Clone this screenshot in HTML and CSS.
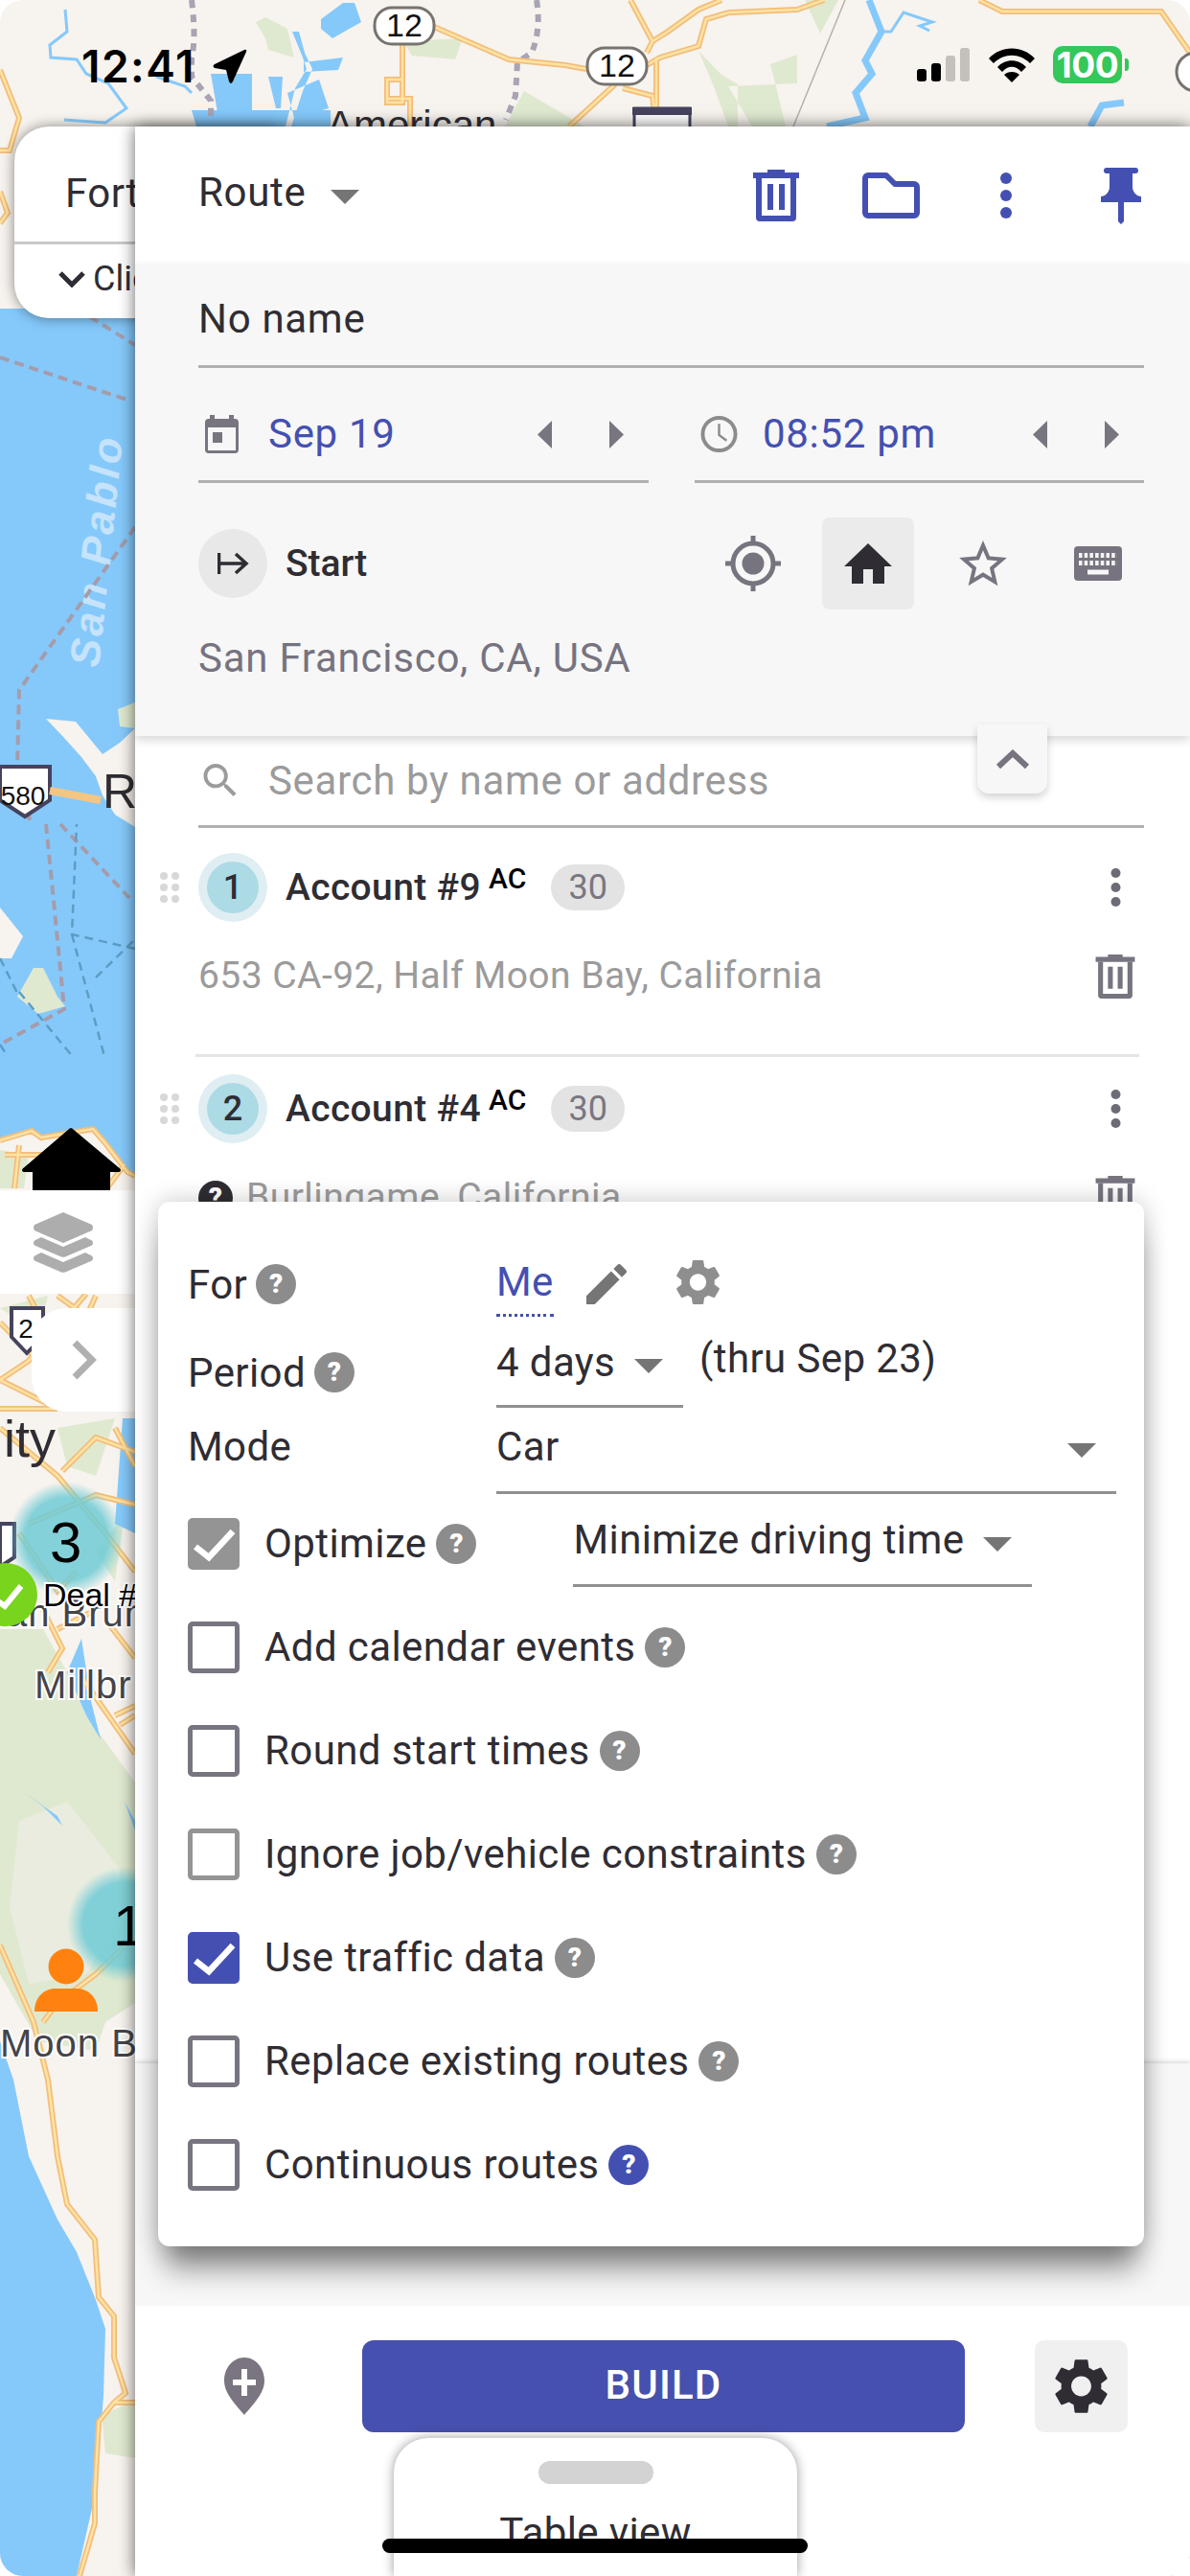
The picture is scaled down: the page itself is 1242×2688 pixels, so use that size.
FILE: index.html
```html
<!DOCTYPE html>
<html lang="en">
<head>
<meta charset="utf-8">
<title>Route planner</title>
<link rel="stylesheet" href="styles.css">
</head>
<body>
<svg class="defs" width="0" height="0" aria-hidden="true">
  <defs>
    <symbol id="i-trash" viewBox="0 0 48 54"><path d="M15 0h18v3h15v6H0V3h15z"/><path fill-rule="evenodd" d="M3 9h42v41a4 4 0 0 1-4 4H7a4 4 0 0 1-4-4zM9 9v39h30V9z"/><path d="M15 15h6v27h-6zM27 15h6v27h-6z"/></symbol>
    <symbol id="i-dots" viewBox="0 0 12 48"><circle cx="6" cy="6" r="6"/><circle cx="6" cy="24" r="6"/><circle cx="6" cy="42" r="6"/></symbol>
    <symbol id="i-gear" viewBox="2.4 2 19.2 20"><path d="M19.14 12.94c.04-.3.06-.61.06-.94 0-.32-.02-.64-.07-.94l2.03-1.58c.18-.14.23-.41.12-.61l-1.92-3.32c-.12-.22-.37-.29-.59-.22l-2.39.96c-.5-.38-1.03-.7-1.62-.94l-.36-2.54c-.04-.24-.24-.41-.48-.41h-3.84c-.24 0-.43.17-.47.41l-.36 2.54c-.59.24-1.13.57-1.62.94l-2.39-.96c-.22-.08-.47 0-.59.22L2.74 8.87c-.12.21-.08.47.12.61l2.03 1.58c-.05.3-.09.63-.09.94s.02.64.07.94l-2.03 1.58c-.18.14-.23.41-.12.61l1.92 3.32c.12.22.37.29.59.22l2.39-.96c.5.38 1.03.7 1.62.94l.36 2.54c.05.24.24.41.48.41h3.84c.24 0 .44-.17.47-.41l.36-2.54c.59-.24 1.13-.56 1.62-.94l2.39.96c.22.08.47 0 .59-.22l1.92-3.32c.12-.22.07-.47-.12-.61l-2.01-1.58zM12 15.6c-1.98 0-3.6-1.62-3.6-3.6s1.62-3.6 3.6-3.6 3.6 1.62 3.6 3.6-1.62 3.6-3.6 3.6z"/></symbol>
    <symbol id="i-left" viewBox="0 0 15 29"><path d="M15 0v29L0 14.500z"/></symbol>
    <symbol id="i-right" viewBox="0 0 15 29"><path d="M0 0v29l15-14.500z"/></symbol>
    <symbol id="i-caret" viewBox="0 0 30 15"><path d="M0 0h30L15 15z"/></symbol>
    <symbol id="i-check" viewBox="0 0 54 54"><path d="M8 30l14 11L47 14" fill="none" stroke="#fff" stroke-width="6.500"/></symbol>
    <radialGradient id="glow"><stop offset="0.72" stop-color="#6fcbd6" stop-opacity=".85"/><stop offset="1" stop-color="#6fcbd6" stop-opacity="0"/></radialGradient>
  </defs>
</svg>

<div class="screen">
  <svg class="map" viewBox="0 0 1242 2688" aria-hidden="true">
    <defs>
      <path id="roads-top" d="M453 28L531 62L590 68L612 72M675 68L689 60L729 48L737 20L761 13L832 10L860 0M658 0L681 43L675 55M681 43L697 33L729 10L753 0M642 88L594 132M650 92L681 100L685 132M685 60V132M420 47V107H404V83H420M404 103H428V132M1022 0L1046 12H1212L1242 55M0 73L20 123L10 157H0M0 200L8 222L0 233"/>
      <path id="roads-sf" d="M0 1190L33 1180L43 1187L97 1178L110 1193L133 1223L141 1227M20 1195L15 1240M5 1205H60M130 1215L110 1242M90 1350L60 1385L30 1420L0 1440M0 1380L60 1440M30 1352L55 1400M100 1352L70 1420M0 1470H60M0 1440L60 1470M60 1352L141 1410M0 1490L60 1540L110 1600L141 1640M65 1535L100 1500L141 1515M30 1590L100 1560L141 1570M141 1530L120 1490M20 1600L60 1660L80 1640M45 1680L65 1720L50 1745M60 1700L100 1680M110 1690L141 1730M85 1750L141 1830M120 1790L141 1780M125 1800L141 1790M0 2030L35 2110L50 2170L60 2250L70 2300L99 2337L103 2397L119 2417L119 2460L131 2497L119 2507L103 2527L99 2600L99 2633L83 2688M119 2507H141M45 2110L60 2090L100 2060L141 2020"/>
    </defs>
    <rect class="land" width="1242" height="2688"/>
    <g class="park">
      <path d="M267 23L277 18L300 30L307 60L280 52L277 40zM420 43L483 40L475 62L430 58zM547 95L610 132H527z"/>
      <path d="M729 53L753 78L770 88V132H760L745 90zM804 67L832 57V87L760 90L785 132H820L810 90zM840 0H875L856 35z"/>
    </g>
    <g class="water">
      <path d="M335 20L358 3H370L377 23L347 40L335 30zM220 77H263V117L227 117zM280 80H295L293 113H288zM317 65L358 60L353 73L317 75zM300 97L333 83L343 113L307 123zM200 115L345 115L345 132H205zM305 33L316 60L320 72L308 92L298 132H304L316 95L326 72L318 55L312 33z"/>
    </g>
    <path class="river" d="M68 10L70 33L52 47L53 60L80 62L90 77L113 87L132 113L110 128L67 125M163 80L193 90L200 97"/>
    <path class="river thick" d="M907 0L920 33L903 63L910 77L893 97L903 123L863 132M1173 107L1150 110L1138 132"/>
    <path class="river" d="M920 33L930 33L943 13L973 23L960 27L970 32"/>
    <path class="boundary" d="M200 0Q205 40 200 60L200 80L220 105V125M560 0Q565 30 555 55L540 65L538 100L528 125"/>
    <path class="grid-line" d="M882 0L828 132"/>
    <use href="#roads-top" class="road-out"/><use href="#roads-top" class="road-in"/>
    <g class="shield"><rect x="391" y="8" width="62" height="38" rx="18"/><rect x="613" y="50" width="62" height="38" rx="18"/><rect x="1228" y="55" width="40" height="40" rx="20"/></g>
    <text class="shield-num" x="422" y="38">12</text><text class="shield-num" x="644" y="80">12</text>
    <path class="interstate" d="M662 113H720V145H662z"/>
    <path class="interstate-top" d="M660 112H722V120H660z"/>
    <text class="city" x="341" y="145">American</text>

    <rect class="sea" y="322" width="141" height="850"/>
    <g class="land-shape"><path d="M48 750L79 753L107 787L125 775L141 760V863L120 850L107 830L100 810L85 790L67 770z"/><path d="M0 947L24 977L12 1000H0z"/></g>
    <path class="park-fill" d="M123 740L141 733V760L125 758zM18 1040L35 1010L45 1010L60 1040L68 1050L40 1058z"/>
    <text class="bay" transform="translate(103 697) rotate(-84)" textLength="240">San Pablo</text>
    <path class="boundary-sea" d="M0 373L135 418M80 322L141 360M141 550L20 720L18 800L32 860M48 860L57 950L67 1053L0 1090M63 860L135 937"/>
    <path class="nav-line" d="M75 975L135 1200M20 1035L115 1150M0 1090L80 1210M0 1000L20 1040M141 990L75 975L80 860M100 1020L141 980M141 1190L120 1210"/>
    <rect class="land" y="1172" width="141" height="1600"/>
    <path class="water-fill" d="M0 1100H141V1227L133 1223L110 1193L97 1178L43 1187L33 1180L0 1190z"/>
    <path class="park-fill" d="M0 1200L30 1205L25 1240H0zM0 1365L50 1352L40 1390zM60 1490L120 1480L100 1540L70 1530zM130 1580L100 1620L120 1650zM0 1700H45L70 1745L90 1790L141 1860V2090L110 2110L100 2140L40 2130L0 2060z"/>
    <path class="park-light" d="M20 1900L70 1880L125 1950V2000L90 2060L30 2070L10 1990z"/>
    <path class="water-fill" d="M128 1480H141V1600L120 1590zM85 1710L70 1745L90 1790L105 1815L95 1775zM25 1870L60 1895L65 1905L45 1885zM130 1880L141 1900V1910zM0 2130L14 2170L30 2250L60 2316L80 2350L100 2400L110 2430L108 2500L100 2600L80 2688H0z"/>
    <path class="park-fill" d="M106 2520L141 2505V2565L110 2560z"/>
    <use href="#roads-sf" class="road-out"/><use href="#roads-sf" class="road-in"/>
    <g class="shield-i"><path d="M12 1365H45V1395L28 1412L12 1395z"/><path d="M0 1590H15V1625L0 1635z"/><path d="M0 800H52V835L26 852L0 835z"/></g>
    <text class="shield-num small" x="24" y="840">580</text><text class="shield-num small" x="27" y="1396">2</text>
    <path class="road-h" d="M52 825L105 835"/>
    <text class="city ri" x="107" y="843">Ri</text>
    <text class="city big" x="4" y="1520">ity</text>
    <text class="city halo" x="6" y="1697">an Brun</text>
    <text class="city halo" x="36" y="1772">Millbr</text>
    <text class="city halo" x="0" y="2146">Moon Bay</text>
    <circle cx="69" cy="1606" r="60" fill="url(#glow)"/>
    <circle cx="130" cy="2008" r="60" fill="url(#glow)"/>
    <text class="cluster" x="52" y="1630">3</text>
    <text class="cluster" x="118" y="2030">1</text>
    <circle class="ok" cx="6" cy="1664" r="33"/>
    <path class="ok-check" d="M-6 1668L5 1676L22 1655"/>
    <text class="deal" x="45" y="1676">Deal #4</text>
    <circle class="person" cx="69" cy="2052" r="18.500"/>
    <path class="person" d="M36 2099C36 2082 48 2075 58 2075H80C90 2075 102 2082 102 2099z"/>
    <path class="teal" d="M40 1220H110V1242H40z"/>
    <path class="house" d="M74 1179L124 1221H113V1242H36V1221H25z"/>
  </svg>

  <div class="fort-card">
    <div class="fort-title">Fort Collins</div>
    <div class="fort-sub">
      <svg class="fort-chevron" viewBox="0 0 30 18"><path d="M3 3l12 12L27 3" fill="none" stroke="currentColor" stroke-width="5"/></svg>
      <span>Click to expand</span>
    </div>
  </div>

  <div class="layers-card">
    <svg class="layers-icon" viewBox="0 0 64 63"><path d="M32 0L62 13Q64 16 62 19L32 32L2 19Q0 16 2 13z"/><path d="M9 26L32 36L55 26L62 29.500Q64 32 62 34.500L34 46.500Q32 47 30 46.500L2 34.500Q0 32 2 29.500z"/><path d="M9 42L32 52L55 42L62 45.500Q64 48 62 50.500L34 62.500Q32 63 30 62.500L2 50.500Q0 48 2 45.500z"/></svg>
  </div>
  <div class="chevron-card">
    <svg class="side-chevron" viewBox="0 0 26 42"><path d="M3 3l18 18L3 39" fill="none" stroke="currentColor" stroke-width="7"/></svg>
  </div>

  <main class="panel">
    <header class="panel-head">
      <div class="route-select"><span>Route</span><svg class="caret"><use href="#i-caret"/></svg></div>
      <div class="head-actions">
        <button class="head-btn"><svg class="i-48"><use href="#i-trash"/></svg></button>
        <button class="head-btn"><svg class="i-folder" viewBox="0 0 60 48"><path d="M6 3H25L34 12H54A3 3 0 0 1 57 15V42A3 3 0 0 1 54 45H6A3 3 0 0 1 3 42V6A3 3 0 0 1 6 3z" fill="none" stroke="currentColor" stroke-width="6" stroke-linejoin="round"/></svg></button>
        <button class="head-btn"><svg class="i-dots"><use href="#i-dots"/></svg></button>
        <button class="head-btn"><svg class="i-pin" viewBox="0 0 42 59"><path d="M6 0H36a3 3 0 0 1 0 6H33V20C33 26 38 30 42 30V36H24V56L21 59L18 56V36H0V30C4 30 9 26 9 20V6H6a3 3 0 0 1 0-6z"/></svg></button>
      </div>
    </header>

    <section class="form">
      <div class="name-field">No name</div>
      <div class="date-row">
        <div class="date-field">
          <svg class="i-cal" viewBox="0 0 35 40"><path d="M5 0h5v4h15V0h5v4h1a4 4 0 0 1 4 4v28a4 4 0 0 1-4 4H4a4 4 0 0 1-4-4V8a4 4 0 0 1 4-4h1z"/><path class="knock" d="M3 13h29v24H3z"/><path d="M8 18h10v11H8z"/></svg>
          <span class="blue">Sep 19</span>
          <svg class="i-arrow push"><use href="#i-left"/></svg>
          <svg class="i-arrow"><use href="#i-right"/></svg>
        </div>
        <div class="date-field time">
          <svg class="i-clock" viewBox="0 0 40 40"><circle cx="20" cy="20" r="17.500" fill="none" stroke="currentColor" stroke-width="4"/><path d="M20 9V21L28 27" fill="none" stroke="currentColor" stroke-width="2.500"/></svg>
          <span class="blue">08:52 pm</span>
          <svg class="i-arrow push"><use href="#i-left"/></svg>
          <svg class="i-arrow"><use href="#i-right"/></svg>
        </div>
      </div>
      <div class="start-row">
        <span class="start-badge"><svg class="i-start" viewBox="0 0 33 26"><path d="M1.500 2V24M3 13H28M19 3L30 13L19 23" fill="none" stroke="currentColor" stroke-width="3.500"/></svg></span>
        <strong class="start-label">Start</strong>
        <div class="start-actions">
          <button class="place-btn"><svg class="i-target" viewBox="0 0 58 58"><circle cx="29" cy="29" r="21" fill="none" stroke="currentColor" stroke-width="5"/><circle cx="29" cy="29" r="11.500"/><path d="M29 0v10M29 48v10M0 29h10M48 29h10" stroke="currentColor" stroke-width="5"/></svg></button>
          <button class="place-btn active"><svg class="i-home" viewBox="0 0 50 42"><path d="M25 0L50 24H42V42H30V27H20V42H8V24H0z"/></svg></button>
          <button class="place-btn"><svg class="i-star" viewBox="2 2 20 19.300"><path d="M22 9.240l-7.190-.62L12 2 9.190 8.630 2 9.240l5.460 4.730L5.820 21 12 17.270 18.180 21l-1.630-7.030L22 9.240zM12 15.400l-3.760 2.270 1-4.280-3.320-2.880 4.380-.38L12 6.100l1.710 4.040 4.380.38-3.320 2.880 1 4.280L12 15.400z"/></svg></button>
          <button class="place-btn"><svg class="i-kbd" viewBox="0 0 50 36"><rect width="50" height="36" rx="4"/><path d="M5 9.500H45M5 17.500H45" stroke="#f7f7f7" stroke-width="5" stroke-dasharray="3.500 2.200"/><path d="M14 27H36" stroke="#f7f7f7" stroke-width="5"/></svg></button>
        </div>
      </div>
      <div class="start-address">San Francisco, CA, USA</div>
    </section>
    <button class="collapse"><svg class="i-up" viewBox="0 0 36 21"><path d="M3 18L18 4L33 18" fill="none" stroke="currentColor" stroke-width="6"/></svg></button>

    <section class="list">
      <div class="search">
        <svg class="i-search" viewBox="3 3 18 18"><path d="M15.500 14h-.79l-.28-.27C15.410 12.590 16 11.110 16 9.500 16 5.910 13.090 3 9.500 3S3 5.910 3 9.500 5.910 16 9.500 16c1.610 0 3.090-.59 4.230-1.570l.27.28v.79l5 4.990L20.490 19l-4.990-5zm-6 0C7.010 14 5 11.990 5 9.500S7.010 5 9.500 5 14 7.010 14 9.500 11.990 14 9.500 14z"/></svg>
        <span>Search by name or address</span>
      </div>
      <article class="stop">
        <div class="stop-head">
          <span class="grip"><i></i><i></i><i></i><i></i><i></i><i></i></span>
          <span class="stop-num"><b>1</b></span>
          <span class="stop-name">Account #9</span><sup class="stop-tag">AC</sup>
          <span class="stop-dur">30</span>
          <svg class="i-kebab"><use href="#i-dots"/></svg>
        </div>
        <div class="stop-addr"><span>653 CA-92, Half Moon Bay, California</span><svg class="i-del"><use href="#i-trash"/></svg></div>
      </article>
      <div class="stop-divider"></div>
      <article class="stop">
        <div class="stop-head">
          <span class="grip"><i></i><i></i><i></i><i></i><i></i><i></i></span>
          <span class="stop-num"><b>2</b></span>
          <span class="stop-name">Account #4</span><sup class="stop-tag">AC</sup>
          <span class="stop-dur">30</span>
          <svg class="i-kebab"><use href="#i-dots"/></svg>
        </div>
        <div class="stop-addr"><span class="unknown">?</span><span>Burlingame, California</span><svg class="i-del"><use href="#i-trash"/></svg></div>
      </article>
    </section>
    <div class="spacer"></div>

    <footer class="foot">
      <svg class="i-addpin" viewBox="0 0 42 60"><path fill-rule="evenodd" d="M21 0C33 0 42 11 42 24C42 38 29 50 21 60C13 50 0 38 0 24C0 11 9 0 21 0zM18 12V23H9V29H18V40H24V29H33V23H24V12z"/></svg>
      <button class="build">BUILD</button>
      <button class="gear-btn"><svg class="i-footgear"><use href="#i-gear"/></svg></button>
      <div class="table-tab"><span class="handle"></span><span class="table-label">Table view</span></div>
    </footer>

    <div class="options">
      <div class="opt-grid">
        <div class="opt-label opt-for">For <span class="help">?</span></div>
        <div class="opt-value opt-for">
          <span class="me">Me</span>
          <svg class="i-pencil" viewBox="3 3 18 18"><path d="M3 17.250V21h3.750L17.810 9.940l-3.750-3.750L3 17.250zM20.710 7.040c.39-.39.39-1.020 0-1.410l-2.340-2.340c-.39-.39-1.020-.39-1.410 0l-1.830 1.830 3.750 3.750 1.830-1.830z"/></svg>
          <svg class="i-optgear"><use href="#i-gear"/></svg>
        </div>
        <div class="opt-label opt-period">Period <span class="help">?</span></div>
        <div class="opt-value opt-period">
          <span class="select w-days"><span>4 days</span><svg class="caret"><use href="#i-caret"/></svg></span>
          <span class="thru">(thru Sep 23)</span>
        </div>
        <div class="opt-label opt-mode">Mode</div>
        <div class="opt-value opt-mode">
          <span class="select w-mode"><span>Car</span><svg class="caret"><use href="#i-caret"/></svg></span>
        </div>
      </div>
      <ul class="checks">
        <li class="check-row">
          <span class="box on-grey"><svg><use href="#i-check"/></svg></span><span>Optimize</span><span class="help">?</span>
          <span class="select w-opt"><span>Minimize driving time</span><svg class="caret"><use href="#i-caret"/></svg></span>
        </li>
        <li class="check-row"><span class="box"></span><span>Add calendar events</span><span class="help">?</span></li>
        <li class="check-row"><span class="box"></span><span>Round start times</span><span class="help">?</span></li>
        <li class="check-row"><span class="box light"></span><span>Ignore job/vehicle constraints</span><span class="help">?</span></li>
        <li class="check-row"><span class="box on-blue"><svg><use href="#i-check"/></svg></span><span>Use traffic data</span><span class="help">?</span></li>
        <li class="check-row"><span class="box"></span><span>Replace existing routes</span><span class="help">?</span></li>
        <li class="check-row"><span class="box"></span><span>Continuous routes</span><span class="help blue-help">?</span></li>
      </ul>
    </div>
  </main>

  <div class="status">
    <span class="clock">12:41</span>
    <svg class="i-loc" viewBox="0 0 36 37"><path d="M2 16L33 1Q36 0 35 3L21 34Q19 38 17 34L14 22L2 20Q-1 18 2 16z"/></svg>
    <div class="status-right">
      <svg class="i-signal" viewBox="0 0 55 35"><rect y="22" width="10" height="13" rx="3"/><rect x="15" y="16" width="10" height="19" rx="3"/><rect class="off" x="30" y="8" width="10" height="27" rx="3"/><rect class="off" x="45" width="10" height="35" rx="3"/></svg>
      <svg class="i-wifi" viewBox="0 0 48 36"><path d="M0 11C13-3 35-3 48 11L43 16C32 5 16 5 5 16z"/><path d="M9 20C17 11 31 11 39 20L34 25C28 18 20 18 14 25z"/><path d="M24 36L16 28C20 24 28 24 32 28z"/></svg>
      <span class="battery">100</span><i class="battery-nub"></i>
    </div>
  </div>
  <div class="home-indicator"></div>
</div>
</body>
</html>
```
FILE: styles.css
```css
* { box-sizing: border-box; }
html, body { margin: 0; padding: 0; background: #fff; overflow: hidden; }
body { font-family: Roboto, "Liberation Sans", sans-serif; color: #2f2d33; }
button { border: 0; padding: 0; background: none; font: inherit; color: inherit; display: flex; align-items: center; justify-content: center; }
svg { display: block; fill: currentColor; flex: none; }
.defs { position: absolute; }

.screen { position: relative; width: 1242px; height: 2688px; overflow: hidden; border-radius: 24px; background: #fff; }

/* map canvas */
.map { position: absolute; inset: 0; width: 1242px; height: 2688px; font-family: "Liberation Sans", sans-serif; }
.land { fill: #f7f3ee; }
.park path, .park-fill { fill: #dfe9d0; }
.park-light { fill: #e9ecdf; }
.water path, .water-fill { fill: #85c9fb; }
.sea { fill: #85c9fb; }
.river { fill: none; stroke: #85c9fb; stroke-width: 3; }
.river.thick { stroke-width: 7; }
.boundary { fill: none; stroke: #a8a4b4; stroke-width: 6; stroke-dasharray: 8 7; }
.boundary-sea { fill: none; stroke: #a59cab; stroke-width: 4; stroke-dasharray: 10 6; }
.nav-line { fill: none; stroke: #5d9dc4; stroke-width: 2.500; stroke-dasharray: 9 6; }
.grid-line { fill: none; stroke: #b5b2ae; stroke-width: 1.500; }
.road-out { fill: none; stroke: #f3bd7b; stroke-width: 6; }
.road-in { fill: none; stroke: #fde3a2; stroke-width: 2.500; }
.road-h { fill: none; stroke: #f5c582; stroke-width: 8; }
.shield rect { fill: #fff; stroke: #77736f; stroke-width: 3; }
.shield-i path { fill: #fff; stroke: #45435e; stroke-width: 4; }
.shield-num { font-size: 34px; text-anchor: middle; fill: #111; }
.shield-num.small { font-size: 28px; }
.interstate { fill: #fff; stroke: #45435e; stroke-width: 3; }
.interstate-top { fill: #45435e; }
.land-shape path { fill: #f7f3ee; }
.city { font-size: 42px; fill: #2f2d33; paint-order: stroke; stroke: #fff; stroke-width: 0; }
.city.ri { font-size: 50px; }
.city.big { font-size: 54px; }
.city.halo { stroke-width: 4; font-size: 40px; fill: #454448; letter-spacing: 1px; }
.bay { font-size: 44px; font-weight: 700; font-style: italic; fill: #c5e3fb; }
.cluster { font-size: 60px; fill: #000; }
.ok { fill: #78d41c; }
.ok-check { fill: none; stroke: #fff; stroke-width: 6; }
.deal { font-size: 34px; fill: #000; paint-order: stroke; stroke: #fff; stroke-width: 4; }
.person { fill: #ff8210; }
.house { fill: #000; stroke: #000; stroke-width: 4; stroke-linejoin: round; }
.teal { fill: #0c5c66; }

/* cards on the map */
.fort-card { position: absolute; left: 15px; top: 132px; width: 300px; height: 200px; background: #fff; border-radius: 36px; box-shadow: 0 0 14px rgba(0,0,0,.45); white-space: nowrap; }
.fort-title { height: 123px; padding: 40px 0 0 53px; font-size: 42px; line-height: 60px; letter-spacing: .5px; border-bottom: 3px solid #c9c9c9; }
.fort-sub { display: flex; align-items: center; gap: 7px; padding: 10px 0 0 45px; font-size: 36px; line-height: 52px; }
.fort-chevron { width: 30px; height: 18px; }
.layers-card { position: absolute; left: 0; top: 1242px; width: 141px; height: 108px; background: #fff; padding: 23px 0 0 34px; }
.layers-icon { width: 64px; height: 63px; fill: #adadad; }
.chevron-card { position: absolute; left: 33px; top: 1365px; width: 200px; height: 108px; background: #fff; border-radius: 36px; padding: 33px 0 0 42px; color: #b0b0b0; }
.side-chevron { width: 26px; height: 42px; }

/* panel */
.panel { position: absolute; left: 141px; top: 132px; width: 1101px; height: 2556px; background: #fff; display: flex; flex-direction: column; box-shadow: 0 0 16px rgba(0,0,0,.6); overflow: hidden; }
.panel-head { height: 144px; flex: none; display: flex; align-items: center; padding: 0 36px 0 66px; }
.route-select { display: flex; align-items: center; font-size: 42px; letter-spacing: .7px; line-height: 60px; margin-top: -6px; }
.route-select .caret { margin-left: 25px; margin-top: 8px; }
.caret { width: 30px; height: 15px; flex: none; fill: #757575; }
.head-actions { margin-left: auto; display: flex; gap: 48px; color: #4450b1; }
.head-btn { width: 72px; height: 72px; }
.i-48 { width: 48px; height: 54px; }
.i-folder { width: 60px; height: 48px; }
.i-dots { width: 12px; height: 48px; }
.i-pin { width: 42px; height: 59px; }

.form { height: 492px; flex: none; background: #f7f7f7; padding: 0 48px 0 66px; box-shadow: 0 4px 10px rgba(0,0,0,.16); position: relative; z-index: 1; }
.name-field { padding: 27px 0 18px; font-size: 42px; line-height: 60px; letter-spacing: .7px; border-bottom: 3px solid #b0b0b0; }
.date-row { display: grid; grid-template-columns: 470px 469px; column-gap: 48px; }
.date-field { display: flex; align-items: center; height: 120px; padding: 39px 26px 18px 7px; border-bottom: 3px solid #b0b0b0; color: #787580; }
.date-field.time { padding-left: 6px; }
.blue { color: #4450b1; font-size: 42px; line-height: 60px; letter-spacing: .7px; }
.i-cal { width: 35px; height: 40px; margin-right: 31px; }
.knock { fill: #f7f7f7; }
.i-clock { width: 39px; height: 40px; margin-right: 26px; color: #8c8c8c; }
.i-arrow { width: 15px; height: 29px; }
.i-arrow.push { margin-left: auto; margin-right: 60px; }
.start-row { display: flex; align-items: center; height: 96px; margin-top: 36px; }
.start-badge { width: 72px; height: 72px; border-radius: 50%; background: #e8e8e8; display: flex; align-items: center; justify-content: center; margin-right: 19px; }
.i-start { width: 33px; height: 26px; }
.start-label { font-size: 39px; font-weight: 500; }
.start-actions { margin-left: auto; display: flex; gap: 24px; color: #77747f; }
.place-btn { width: 96px; height: 96px; border-radius: 8px; }
.place-btn.active { background: #ebebeb; color: #2f2d33; }
.i-target { width: 58px; height: 58px; }
.i-home { width: 50px; height: 42px; }
.i-star { width: 50px; height: 48px; }
.i-kbd { width: 50px; height: 36px; }
.start-address { margin-top: 21px; font-size: 42px; line-height: 60px; letter-spacing: .75px; color: #767380; }

/* collapse tab straddles the form's lower edge */
.collapse { position: absolute; z-index: 1; left: 879px; top: 624px; width: 73px; height: 72px; background: #f7f7f7; border-radius: 0 0 12px 12px; box-shadow: 0 4px 8px rgba(0,0,0,.18); color: #77747f; padding-top: 0; }
.i-up { width: 36px; height: 21px; }

.list { height: 1385px; flex: none; }
.search { display: flex; align-items: center; height: 96px; margin: 0 48px 0 66px; padding: 0 0 0 5px; border-bottom: 3px solid #b0b0b0; color: #9b9b9b; font-size: 42px; letter-spacing: .65px; }
.i-search { width: 36px; height: 35px; margin-right: 32px; }
.stop { padding: 26px 0 0 26px; }
.stop + .stop-divider + .stop { padding-top: 18px; }
.stop-head { display: flex; align-items: center; height: 72px; }
.grip { display: grid; grid-template-columns: 8px 8px; gap: 4px; margin-right: 20px; }
.grip i { width: 8px; height: 8px; border-radius: 50%; background: #d8d8d8; }
.stop-num { width: 72px; height: 72px; border-radius: 50%; background: #dfeef2; display: flex; align-items: center; justify-content: center; margin-right: 19px; }
.stop-num b { width: 54px; height: 54px; border-radius: 50%; background: #acdae5; font-size: 36px; font-weight: 500; line-height: 54px; text-align: center; }
.stop-name { font-size: 39px; font-weight: 500; letter-spacing: .35px; }
.stop-tag { font-size: 30px; font-weight: 500; color: #000; margin: -18px 0 0 8px; line-height: 30px; }
.stop-dur { margin-left: 26px; height: 48px; width: 77px; border-radius: 24px; background: #e3e3e3; color: #7a7680; font-size: 36px; line-height: 48px; text-align: center; }
.i-kebab { width: 11px; height: 40px; margin-left: auto; margin-right: 72px; color: #6e6b76; }
.stop-addr { display: flex; align-items: center; height: 53px; margin: 30px 57px 0 40px; color: #9b9b9b; font-size: 39px; letter-spacing: .45px; }
.stop-addr > span:not(.unknown) { margin-top: -2px; }
.i-del { width: 42px; height: 46px; margin-left: auto; color: #77747f; }
.unknown { width: 36px; height: 36px; border-radius: 50%; background: #2f2d33; color: #fff; font-size: 28px; font-weight: 900; line-height: 36px; text-align: center; margin-right: 14px; }
.stop-divider { height: 3px; margin: 55px 53px 0 63px; background: #e5e5e5; }

.spacer { height: 253px; flex: none; background: #f7f7f7; box-shadow: 0 -1px 5px rgba(0,0,0,.2); }
.foot { height: 282px; flex: none; background: #fff; position: relative; z-index: 2; display: flex; align-items: flex-start; padding-top: 36px; }
.i-addpin { width: 42px; height: 60px; margin: 18px 102px 0 93px; fill: #7a7580; }
.build { width: 629px; height: 96px; background: #4650ae; border-radius: 12px; color: #fff; font-size: 42px; font-weight: 500; letter-spacing: 1.200px; padding-bottom: 3px; }
.gear-btn { width: 97px; height: 96px; margin-left: 73px; background: #f0f0f0; border-radius: 10px; }
.i-footgear { width: 57px; height: 58px; }
.table-tab { position: absolute; left: 270px; top: 138px; width: 421px; height: 144px; background: #fff; border-radius: 36px 36px 0 0; box-shadow: 0 0 12px rgba(0,0,0,.4); display: flex; flex-direction: column; align-items: center; padding-top: 24px; }
.handle { width: 120px; height: 24px; border-radius: 12px; background: #d3d3d3; }
.table-label { font-size: 42px; line-height: 60px; letter-spacing: .4px; margin-top: 21px; }

/* options popup */
.options { position: absolute; z-index: 1; left: 24px; top: 1122px; width: 1029px; height: 1090px; background: #fff; border-radius: 12px; box-shadow: 0 30px 30px -8px rgba(0,0,0,.45), 0 0 26px rgba(0,0,0,.22); padding: 46px 0 0 31px; font-size: 42px; letter-spacing: .4px; }
.opt-grid { display: grid; grid-template-columns: 322px 648px; grid-template-rows: 80px 90px 90px; }
.opt-label, .opt-value { display: flex; align-items: center; }
.opt-label.opt-period { padding-top: 14px; }
.opt-label.opt-mode { padding-bottom: 12px; }
.opt-label .help { margin-left: 9px; }
.me { color: #4450b1; height: 66px; line-height: 60px; margin-top: 8px; border-bottom: 3px dotted #4450b1; }
.i-pencil { width: 42px; height: 42px; margin-left: 34px; fill: #757575; }
.i-optgear { width: 47px; height: 48px; margin-left: 51px; fill: #8e8e8e; }
.opt-value.opt-for { align-items: flex-start; }
.opt-for .i-pencil { margin-top: 19px; }
.opt-for .i-optgear { margin-top: 14px; }
.opt-value.opt-period, .opt-value.opt-mode { align-items: flex-end; padding-bottom: 1px; }
.select { display: flex; align-items: center; border-bottom: 3px solid #909090; height: 76px; padding: 0 21px 16px 0; }
.select .caret { margin-left: auto; margin-top: 8px; }
.w-days { width: 195px; }
.w-mode { width: 647px; padding-bottom: 18px; height: 78px; }
.w-opt { width: 479px; height: 72px; margin-left: 91px; padding-bottom: 23px; }
.thru { margin: 0 0 27px 17px; line-height: 48px; }
.help { flex: none; width: 42px; height: 42px; border-radius: 50%; background: #8c8c8c; color: #fff; font-size: 28px; font-weight: 900; line-height: 42px; text-align: center; letter-spacing: 0; }
.help.blue-help { background: #4450b1; }
.checks { list-style: none; margin: 24px 0 0; padding: 0; display: flex; flex-direction: column; gap: 54px; }
.check-row { display: flex; align-items: flex-start; height: 54px; line-height: 54px; gap: 10px; }
.check-row > span:nth-child(2) { margin-left: 16px; }
.box { flex: none; width: 54px; height: 54px; border-radius: 5px; border: 5.500px solid #787580; }
.box.light { border-color: #949494; }
.box svg { width: 54px; height: 54px; margin: -5.500px; }
.box.on-grey { background: #949494; border-color: #949494; }
.box.on-blue { background: #4450b1; border-color: #4450b1; }
.check-row .help { margin-top: 6px; }

/* status bar */
.status { position: absolute; z-index: 3; left: 0; top: 0; width: 1242px; display: flex; align-items: flex-start; padding: 46px 64px 0 85px; color: #000; }
.clock { font-family: Inter, Roboto, sans-serif; font-size: 46px; font-weight: 600; line-height: 46px; letter-spacing: 1.500px; }
.i-loc { width: 36px; height: 37px; margin: 5px 0 0 18px; }
.status-right { margin-left: auto; display: flex; align-items: flex-start; }
.i-signal { width: 55px; height: 35px; margin-top: 4px; }
.off { fill: #c4c0bc; }
.i-wifi { width: 48px; height: 36px; margin: 4px 0 0 20px; }
.battery { width: 72px; height: 39px; margin: 2px 0 0 19px; border-radius: 10px; background: #34c759; color: #fff; font-family: Inter, Roboto, sans-serif; font-size: 37px; font-weight: 700; line-height: 39px; text-align: center; letter-spacing: -.5px; }
.battery-nub { width: 4px; height: 13px; margin: 15px 0 0 3px; background: #34c759; border-radius: 0 3px 3px 0; }
.home-indicator { position: absolute; z-index: 5; left: 399px; top: 2649px; width: 444px; height: 15px; border-radius: 8px; background: #000; }
```
